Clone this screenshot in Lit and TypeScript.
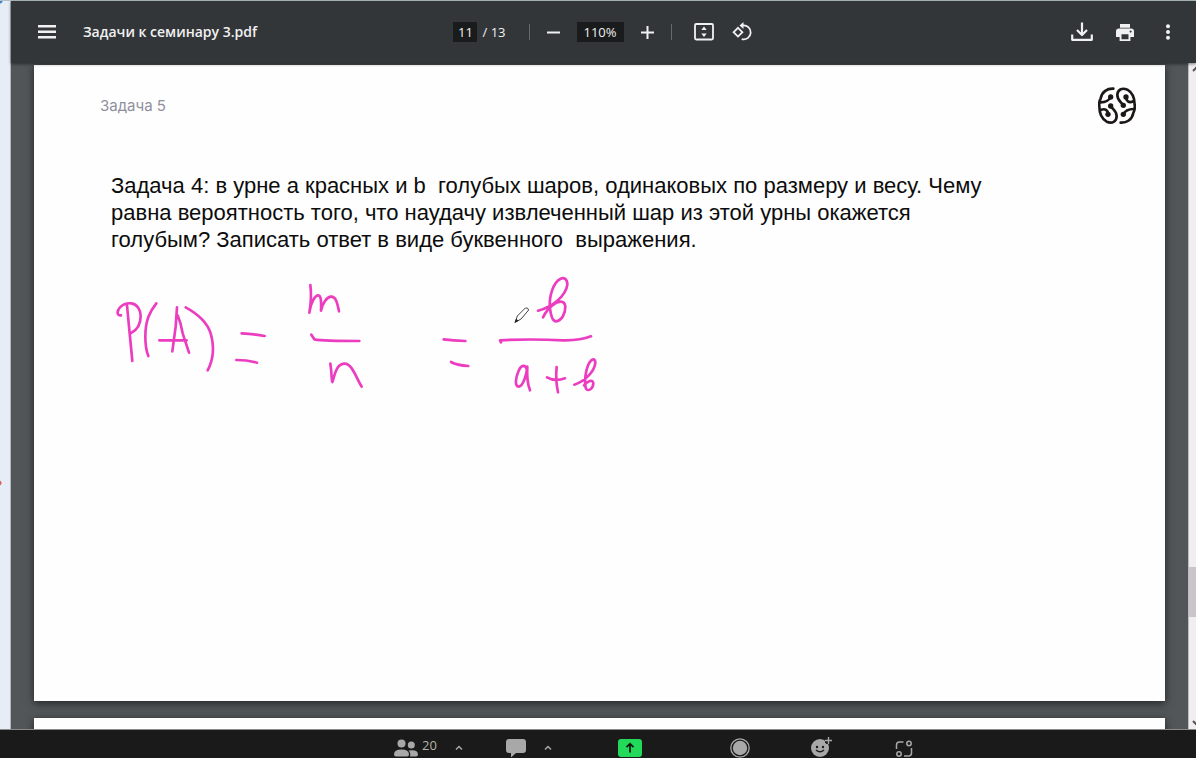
import { LitElement, html, css, svg } from "lit";
import { customElement, property } from "lit/decorators.js";

@customElement("pdf-toolbar")
class PdfToolbar extends LitElement {
  @property() name = "";
  @property({ type: Number }) page = 1;
  @property({ type: Number }) pages = 1;
  @property() zoom = "100%";

  static styles = css`
    :host {
      display: grid;
      grid-template-columns: 1fr auto 1fr;
      align-items: center;
      height: 62px;
      background: #323639;
      color: #f1f1f1;
      font: 13px/20px "Open Sans", "Noto Sans", sans-serif;
      box-shadow: 0 1px 3px rgba(0, 0, 0, 0.5);
    }
    button {
      display: grid;
      place-items: center;
      width: 24px;
      height: 24px;
      padding: 0;
      border: 0;
      background: none;
      color: inherit;
      cursor: pointer;
    }
    svg { display: block; fill: currentColor; }
    .left, .center, .right { display: flex; align-items: center; }
    .left { gap: 24px; padding-left: 24px; }
    .title { margin: 0; font-size: 14px; font-weight: 600; white-space: nowrap; }
    .right { justify-content: flex-end; gap: 19px; padding-right: 16px; }
    input {
      box-sizing: border-box;
      height: 20px;
      padding: 0;
      border: 0;
      background: #191b1c;
      color: inherit;
      font: inherit;
      text-align: center;
    }
    .page { width: 24px; }
    .zoom { width: 47px; }
    .total { padding-left: 5px; white-space: pre; }
    .rule { width: 1px; height: 16px; background: #65696c; }
    .first { margin: 0 12px 0 23px; }
    .second { margin: 0 20px 0 11px; }
    .out { margin-right: 11px; }
    .in { margin-left: 12px; }
    .rotate { margin-left: 14px; }
  `;

  render() {
    return html`
      <div class="left">
        <button aria-label="Меню">
          <svg width="18" height="14"><path d="M0 0h18v2.4H0zM0 5.5h18v2.4H0zM0 11h18v2.4H0z" /></svg>
        </button>
        <h1 class="title">${this.name}</h1>
      </div>
      <div class="center">
        <input class="page" aria-label="Страница" .value=${String(this.page)} />
        <span class="total">/ ${this.pages}</span>
        <span class="rule first"></span>
        <button class="out" aria-label="Уменьшить">
          <svg width="13" height="13"><path d="M0 5.5h13v2H0z" /></svg>
        </button>
        <input class="zoom" aria-label="Масштаб" .value=${this.zoom} />
        <button class="in" aria-label="Увеличить">
          <svg width="13" height="13"><path d="M0 5.5h5.5V0h2v5.5H13v2H7.500V13h-2V7.500H0z" /></svg>
        </button>
        <span class="rule second"></span>
        <button aria-label="По размеру страницы">
          <svg width="20" height="18">
            <rect x="1" y="1" width="18" height="15.500" rx="1.200" fill="none" stroke="currentColor" stroke-width="1.800" />
            <path d="M10 3.600l2.700 3.400H7.300zM10 13.900l2.700-3.400H7.300z" />
          </svg>
        </button>
        <button class="rotate" aria-label="Повернуть">
          <svg width="20" height="20" viewBox="0 0 20 20">
            <path d="M6 5.800l4.400 4.400L6 14.600 1.600 10.200zM10.500 3.500a7 7 0 1 1-.8 13.600" fill="none" stroke="currentColor" stroke-width="1.800" />
            <path d="M11.500 0v7L7.500 3.500z" />
          </svg>
        </button>
      </div>
      <div class="right">
        <button aria-label="Скачать">
          <svg width="22" height="20" viewBox="0 0 22 20">
            <path d="M11 .5v12M6 8l5 5 5-5M1.200 12.500v5.300h19.600v-5.300" fill="none" stroke="currentColor" stroke-width="2.200" stroke-linejoin="round" />
          </svg>
        </button>
        <button aria-label="Печать">
          <svg width="18" height="17" viewBox="0 0 18 17">
            <path fill-rule="evenodd" d="M4 0h10v3.800H4zM3 4.600h12a3 3 0 0 1 3 3v5.400h-3.600v4H3.600v-4H0V7.600a3 3 0 0 1 3-3zM5.500 10.200v5h7v-5zM14.600 6.600a1 1 0 1 0 .01 0z" />
          </svg>
        </button>
        <button aria-label="Ещё">
          <svg width="4" height="16"><circle cx="2" cy="2.200" r="2" /><circle cx="2" cy="8" r="2" /><circle cx="2" cy="13.800" r="2" /></svg>
        </button>
      </div>
    `;
  }
}

@customElement("meeting-bar")
class MeetingBar extends LitElement {
  @property({ type: Number }) people = 0;

  static styles = css`
    :host {
      display: flex;
      justify-content: center;
      height: 28px;
      overflow: hidden;
      background: #1a1a1a;
      color: #a8a8a8;
      font: 13px/16px "Open Sans", "Noto Sans", sans-serif;
    }
    .bar { display: flex; align-items: flex-start; padding: 6px 0 0 111px; }
    button {
      display: flex;
      align-items: flex-start;
      padding: 0;
      border: 0;
      background: none;
      color: inherit;
      font: inherit;
      cursor: pointer;
    }
    svg { display: block; fill: currentColor; }
    .people { gap: 4px; }
    .count { padding-top: 1px; color: #b4b4a8; }
    .more { padding: 9px 0 0 18px; }
    .chat { margin-left: 43px; }
    .share { margin-left: 66px; }
    .record { margin-left: 87px; }
    .react { margin-left: 60px; }
    .apps { margin-left: 62px; }
  `;

  chevron(label: string) {
    return html`<button class="more" aria-label=${label}>
      <svg width="8" height="6"><path d="M1 4.500l3-3 3 3" fill="none" stroke="currentColor" stroke-width="1.500" /></svg>
    </button>`;
  }

  render() {
    return html`<div class="bar">
      <button class="people" aria-label="Участники, ${this.people}">
        <svg width="24" height="22" viewBox="0 0 24 22">
          <circle cx="7.500" cy="7.500" r="4" /><circle cx="17.300" cy="9" r="3.500" />
          <path d="M0 18.500q0-5 7.500-5t7.500 5q0 2-2 2H2q-2 0-2-2zM16 20.500q1-3.500-1.500-6 9.500-1.500 9.500 4 0 2-2 2z" />
        </svg>
        <span class="count">${this.people}</span>
      </button>
      ${this.chevron("Параметры участников")}
      <button class="chat" aria-label="Чат">
        <svg width="20" height="22" viewBox="0 0 20 22"><path d="M3 3h14q3 0 3 3v8q0 3-3 3H10l-5 4.500V17H3q-3 0-3-3V6q0-3 3-3z" /></svg>
      </button>
      ${this.chevron("Параметры чата")}
      <button class="share" aria-label="Демонстрация экрана">
        <svg width="24" height="22" viewBox="0 0 24 22">
          <rect y="3" width="24" height="18" rx="3" fill="#23d959" />
          <path d="M12 16.500V8M8.500 11.200L12 7.700l3.500 3.500" fill="none" stroke="#101a12" stroke-width="1.800" />
        </svg>
      </button>
      <button class="record" aria-label="Запись">
        <svg width="22" height="22" viewBox="0 0 22 22">
          <circle cx="11" cy="12" r="7.200" /><circle cx="11" cy="12" r="9.200" fill="none" stroke="currentColor" stroke-width="1.300" />
        </svg>
      </button>
      <button class="react" aria-label="Реакции">
        <svg width="22" height="22" viewBox="0 0 22 22">
          <circle cx="9" cy="12" r="9" />
          <path d="M17.500 1v7M14 4.500h7" stroke="#1a1a1a" stroke-width="5" />
          <path d="M17.500 1v7M14 4.500h7" stroke="currentColor" stroke-width="1.400" />
          <circle cx="6" cy="11" r="1.200" fill="#1a1a1a" /><circle cx="12" cy="11" r="1.200" fill="#1a1a1a" />
          <path d="M5 14q4 3.500 8 0" fill="none" stroke="#1a1a1a" stroke-width="1.300" />
        </svg>
      </button>
      <button class="apps" aria-label="Приложения">
        <svg width="18" height="22" viewBox="0 0 18 22">
          <g fill="none" stroke="currentColor" stroke-width="1.500">
            <path d="M1.500 13V9q0-3 3-3h4M16.500 12v5q0 3-3 3H9" />
            <circle cx="14" cy="7.500" r="2.200" /><circle cx="4" cy="18" r="2.200" />
          </g>
        </svg>
      </button>
    </div>`;
  }
}

/* One hemisphere of the brain mark; the other is the same shape turned by half. */
const hemisphere = svg`
  <g fill="none" stroke="#1c1818" stroke-width="8" stroke-linecap="round">
    <path d="M58 19C40 18 24 28 20 48C15 58 15 66 16 72C16 90 20 108 38 118C54 125 68 118 68 102C68 86 60 84 51 73" />
    <path d="M50 44C44 56 34 60 20 60M20 83C34 77 42 84 42 95" />
  </g>
  <g fill="#1c1818"><circle cx="50" cy="44" r="8" /><circle cx="50" cy="71" r="8" /><circle cx="42" cy="96" r="8" /></g>`;

const ink = [
  "M63 136C50 138 50 122 60 112C72 100 84 99 94 100C112 102 122 120 122 138C122 165 108 182 92 190M81 106L89 190 97 273",
  "M169 100C150 124 136 150 136 200C136 225 140 245 145 258",
  "M231 112L227 170 217 244M233 136Q243 160 248 190L267 248M178 211H260",
  "M257 112C290 130 322 158 332 190C342 225 342 265 323 301",
  "M425 190Q460 192 494 198M409 270Q440 270 471 278",
  "M631 45Q636 84 628 128C632 100 644 76 655 76C664 76 664 100 663 122C668 98 680 82 692 80C708 78 712 100 717 124",
  "M634 194L643 208Q670 213 778 213",
  "M691 281C696 310 694 330 697 336C704 320 706 284 732 281C755 278 768 322 785 350",
  "M1031 208Q1060 212 1096 213M1053 276Q1070 286 1105 288",
  "M1314 122C1360 110 1398 76 1402 44C1402 26 1392 22 1382 26C1360 36 1346 80 1350 115C1353 140 1358 154 1368 154C1386 152 1396 130 1396 110C1394 88 1372 94 1360 104C1346 114 1336 128 1329 142",
  "M1203 217L1200 211Q1290 206 1390 211Q1440 212 1473 199",
  "M1281 300C1276 282 1264 284 1256 302C1246 324 1244 350 1256 350C1270 348 1280 312 1282 290C1280 320 1284 345 1290 361",
  "M1370 291Q1366 330 1374 367M1341 322Q1365 336 1395 325",
  "M1423 344C1455 334 1484 304 1486 278C1485 264 1476 266 1468 278C1456 300 1452 340 1458 356C1464 366 1480 356 1480 340C1478 326 1464 334 1452 346",
];

@customElement("app-root")
class AppRoot extends LitElement {
  static styles = css`
    :host {
      display: flex;
      flex-direction: column;
      height: 100vh;
      overflow: hidden;
      background: #b4c0c4;
    }
    .desktop { flex: 1; min-height: 0; display: flex; padding-top: 1px; background: #b4c0c4; }
    .strip {
      width: 10px;
      border-right: 1px solid #b3b8bf;
      background:
        radial-gradient(circle at 0 0, #3a86c8 2px, transparent 3px),
        radial-gradient(circle at -1px 482px, #dc5a64 2px, transparent 3px),
        #e6edf6;
    }
    .viewer { flex: 1; min-width: 0; display: flex; flex-direction: column; }
    pdf-toolbar { z-index: 1; }
    .area { flex: 1; min-height: 0; display: flex; background: #525659; }
    .sheets {
      flex: 1;
      min-width: 0;
      display: flex;
      flex-direction: column;
      gap: 17px;
      padding: 2px 23px 0;
      overflow: hidden;
    }
    .sheet {
      box-sizing: border-box;
      flex: none;
      height: 636px;
      padding: 22px 29px 0 66px;
      background: #fefefe;
      box-shadow: 0 2px 8px rgba(0, 0, 0, 0.6);
    }
    .head { display: flex; justify-content: space-between; align-items: flex-start; }
    .label { margin: 9px 0 0; font: 15px/20px "Inter", "Roboto", sans-serif; color: #8f8f9e; }
    .task {
      margin: 47px 0 0 11px;
      max-width: 900px;
      font: 22px/27px "Liberation Sans", Arial, sans-serif;
      color: #0c0c0c;
      white-space: pre-wrap;
    }
    .ink { display: block; margin-top: 17px; fill: none; stroke: #ec3cc0; stroke-width: 8; stroke-linecap: round; stroke-linejoin: round; }
    .pencil { stroke: #444; stroke-width: 3; fill: #fff; }
    .tip { fill: #222; stroke: none; }
    .track { width: 7px; display: flex; flex-direction: column; align-items: center; justify-content: space-between; border-left: 1px solid #bdbabd; background: #f1eef2; }
    .thumb { width: 100%; height: 50px; margin-top: auto; margin-bottom: 102px; background: #c9c5ca; }
    .arrow { display: block; fill: none; stroke: #555; stroke-width: 2; }
    meeting-bar { border-top: 1px solid #8a8a8a; }
  `;

  render() {
    return html`
      <div class="desktop">
        <div class="strip"></div>
        <div class="viewer">
          <pdf-toolbar name="Задачи к семинару 3.pdf" page="11" pages="13" zoom="110%"></pdf-toolbar>
          <div class="area">
            <main class="sheets">
              <section class="sheet">
                <div class="head">
                  <h2 class="label">Задача 5</h2>
                  <svg width="38" height="38" viewBox="12 14 114 114">
                    ${hemisphere}
                    <g transform="rotate(180 69 70)">${hemisphere}</g>
                  </svg>
                </div>
                <p class="task">Задача 4: в урне a красных и b  голубых шаров, одинаковых по размеру и весу. Чему равна вероятность того, что наудачу извлеченный шар из этой урны окажется голубым? Записать ответ в виде буквенного  выражения.</p>
                <svg class="ink" width="520" height="130" viewBox="0 0 1560 390">
                  ${ink.map((d) => svg`<path d=${d} />`)}
                  <path class="pencil" d="M1246 156L1252 138 1276 114Q1284 112 1286 120L1264 146Z" />
                  <path class="tip" d="M1243 159L1248 146 1256 152Z" />
                </svg>
              </section>
              <section class="sheet"></section>
            </main>
            <div class="track">
              <svg class="arrow" width="7" height="10"><path d="M4 8l4-4" /></svg>
              <div class="thumb"></div>
              <svg class="arrow" width="7" height="10"><path d="M4 2l4 4" /></svg>
            </div>
          </div>
        </div>
      </div>
      <meeting-bar people="20"></meeting-bar>
    `;
  }
}
